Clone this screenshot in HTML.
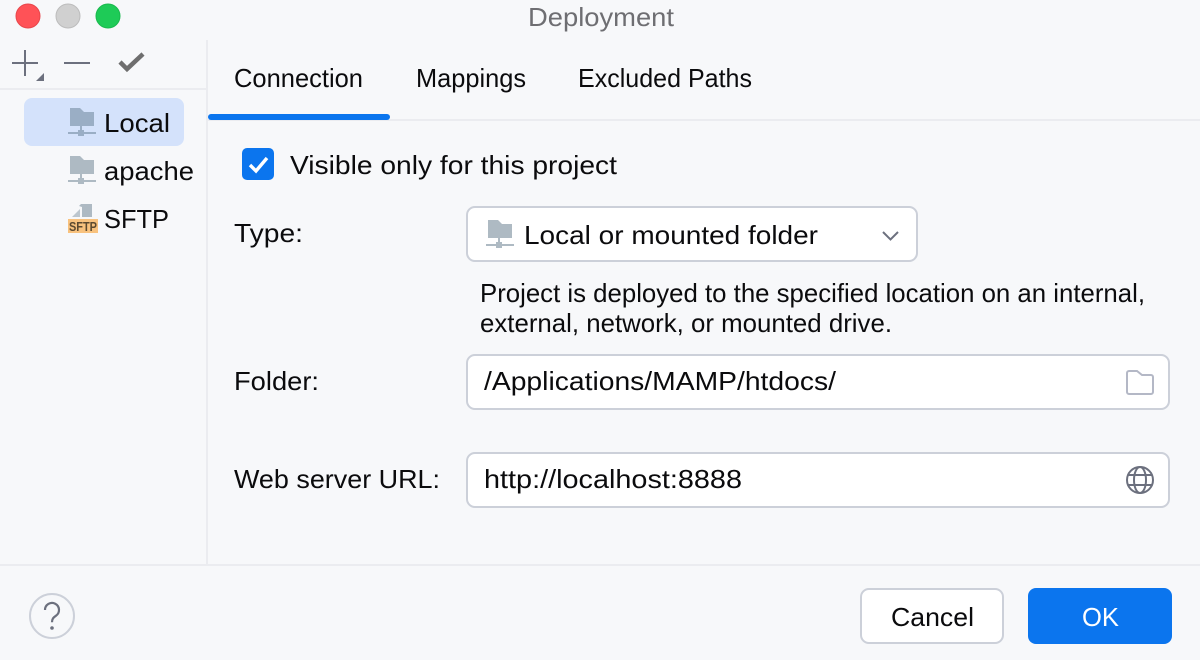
<!DOCTYPE html>
<html><head><meta charset="utf-8"><title>Deployment</title>
<style>
html,body{margin:0;padding:0;background:#f7f8fa;width:1200px;height:660px;overflow:hidden}
svg{display:block}
text{font-family:"Liberation Sans",sans-serif;font-size:26px;fill:#0b0b0d}
</style></head><body>
<svg width="1200" height="660" viewBox="0 0 1200 660" xmlns="http://www.w3.org/2000/svg">
<defs>
<g id="fold">
<path d="M2 0h10l4 4h10v14H2z" fill="currentColor"/>
<rect x="12" y="18" width="2" height="6" fill="currentColor"/>
<rect x="0" y="24" width="28" height="2" fill="currentColor"/>
<rect x="10" y="22" width="6" height="6" fill="currentColor"/>
</g>
</defs>
<rect width="1200" height="660" fill="#f7f8fa"/>
<circle cx="28" cy="16" r="12" fill="#ff5257" stroke="#e8464b"/>
<circle cx="68" cy="16" r="12" fill="#d0d0d0" stroke="#bcbcbc"/>
<circle cx="108" cy="16" r="12" fill="#1ecb57" stroke="#19b94d"/>
<text x="528" y="26" textLength="146" lengthAdjust="spacingAndGlyphs" style="fill:#6e6e72">Deployment</text>

<rect x="206" y="40" width="2" height="525" fill="#ebecf0"/>
<rect x="0" y="88" width="206" height="2" fill="#ebecf0"/>
<rect x="12" y="62" width="26" height="2" fill="#6c707e"/>
<rect x="24" y="50" width="2" height="26" fill="#6c707e"/>
<path d="M44 73v8h-8z" fill="#6c707e"/>
<rect x="64" y="62" width="26" height="2" fill="#6c707e"/>
<path d="M120 62l7 7 16-15" fill="none" stroke="#6e6e6e" stroke-width="4.5"/>

<rect x="24" y="98" width="160" height="48" rx="8" fill="#d4e2fb"/>
<use href="#fold" x="68" y="108" style="color:#9aaec5"/>
<text x="104" y="132" textLength="66" lengthAdjust="spacingAndGlyphs">Local</text>
<use href="#fold" x="68" y="156" style="color:#aebac3"/>
<text x="104" y="180" textLength="90" lengthAdjust="spacingAndGlyphs">apache</text>
<path d="M72 217l8-8v8z" fill="#bcc6ce"/>
<path d="M79 206l2-2h11v13H82v-10z" fill="#aebac3"/>
<rect x="68" y="219" width="30" height="14" fill="#f8c27e"/>
<text x="69" y="231" textLength="28" lengthAdjust="spacingAndGlyphs" style="font-size:13px;font-weight:bold;fill:#5c4a30">SFTP</text>
<text x="104" y="228" textLength="65" lengthAdjust="spacingAndGlyphs">SFTP</text>

<rect x="208" y="119" width="992" height="2" fill="#ebecf0"/>
<rect x="208" y="114" width="182" height="6" rx="3" fill="#0b75ee"/>
<text x="234" y="87" textLength="129" lengthAdjust="spacingAndGlyphs">Connection</text>
<text x="416" y="87" textLength="110" lengthAdjust="spacingAndGlyphs">Mappings</text>
<text x="578" y="87" textLength="174" lengthAdjust="spacingAndGlyphs">Excluded Paths</text>

<rect x="242" y="148" width="32" height="32" rx="5" fill="#0b75ee"/>
<path d="M250 165l6 6 11-13" fill="none" stroke="#fff" stroke-width="3.4"/>
<text x="290" y="174" textLength="327" lengthAdjust="spacingAndGlyphs">Visible only for this project</text>

<text x="234" y="242" textLength="69" lengthAdjust="spacingAndGlyphs">Type:</text>
<rect x="467" y="207" width="450" height="54" rx="8" fill="#fff" stroke="#ccd0d9" stroke-width="2"/>
<use href="#fold" x="486" y="220" style="color:#aebac3"/>
<text x="524" y="244" textLength="294" lengthAdjust="spacingAndGlyphs">Local or mounted folder</text>
<path d="M883 232l7.500 7.500 7.500-7.500" fill="none" stroke="#6c707e" stroke-width="2"/>

<text x="480" y="302" textLength="665" lengthAdjust="spacingAndGlyphs">Project is deployed to the specified location on an internal,</text>
<text x="480" y="332" textLength="412" lengthAdjust="spacingAndGlyphs">external, network, or mounted drive.</text>

<text x="234" y="390" textLength="85" lengthAdjust="spacingAndGlyphs">Folder:</text>
<rect x="467" y="355" width="702" height="54" rx="8" fill="#fff" stroke="#ccd0d9" stroke-width="2"/>
<text x="484" y="390" textLength="352" lengthAdjust="spacingAndGlyphs">/Applications/MAMP/htdocs/</text>
<path d="M1127 373a2 2 0 0 1 2-2h8l5 4h9a2 2 0 0 1 2 2v15a2 2 0 0 1-2 2h-22a2 2 0 0 1-2-2z" fill="none" stroke="#b4b8c6" stroke-width="2"/>

<text x="234" y="488" textLength="206" lengthAdjust="spacingAndGlyphs">Web server URL:</text>
<rect x="467" y="453" width="702" height="54" rx="8" fill="#fff" stroke="#ccd0d9" stroke-width="2"/>
<text x="484" y="488" textLength="258" lengthAdjust="spacingAndGlyphs">http://localhost:8888</text>
<g fill="none" stroke="#6c707e" stroke-width="2">
<circle cx="1140" cy="480" r="13"/>
<ellipse cx="1140" cy="480" rx="6" ry="13"/>
<path d="M1128 475h24M1128 485h24"/>
</g>

<rect x="0" y="564" width="1200" height="2" fill="#ebecf0"/>
<circle cx="52" cy="616" r="22" fill="#f7f8fa" stroke="#ccd0d9" stroke-width="2"/>
<path d="M45 610a7 7 0 1 1 11 5.700c-2.500 1.800-4 3-4 6.500" fill="none" stroke="#6c707e" stroke-width="2.200"/>
<circle cx="52" cy="628" r="1.800" fill="#6c707e"/>

<rect x="861" y="589" width="142" height="54" rx="8" fill="#fff" stroke="#ccd0d9" stroke-width="2"/>
<text x="891" y="626" textLength="83" lengthAdjust="spacingAndGlyphs">Cancel</text>
<rect x="1028" y="588" width="144" height="56" rx="8" fill="#0b75ee"/>
<text x="1082" y="626" textLength="37" lengthAdjust="spacingAndGlyphs" style="fill:#fff">OK</text>
</svg>
</body></html>
